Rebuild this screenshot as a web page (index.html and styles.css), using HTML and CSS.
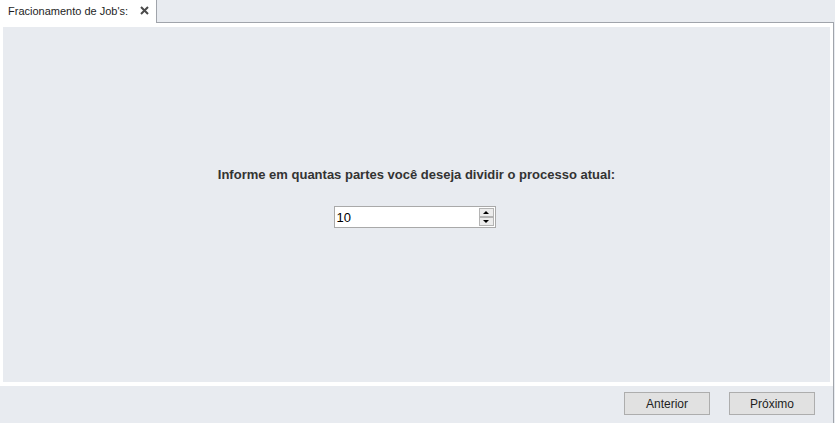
FILE: index.html
```html
<!DOCTYPE html>
<html lang="pt">
<head>
    <meta charset="UTF-8">
    <title>Fracionamento de Job's</title>
    <link rel="stylesheet" href="styles.css">
</head>
<body>
    <div class="tabstrip">
        <div class="tab">
            <span class="tab-label">Fracionamento de Job's:</span>
            <svg class="tab-close" width="9" height="9" viewBox="0 0 9 9">
                <path d="M1 1 L8 8 M8 1 L1 8" stroke="#4a4a4a" stroke-width="2"/>
            </svg>
        </div>
        <div class="tab-rest"></div>
    </div>

    <div class="page">
        <!-- area principal -->
        <div class="main">
            <p class="question">Informe em quantas partes você deseja dividir o processo atual:</p>
            <div class="spin">
                <span class="spin-value">10</span>
                <div class="spin-buttons">
                    <div class="spin-btn"><span class="arrow-up"></span></div>
                    <div class="spin-btn"><span class="arrow-down"></span></div>
                </div>
            </div>
        </div>

        <!-- botões de navegação -->
        <div class="footer">
            <button class="btn">Anterior</button>
            <button class="btn">Próximo</button>
        </div>
    </div>
</body>
</html>
```

FILE: styles.css
```css
body {
    margin: 0;
    background-color: #e8ebf0;
    font-family: "Liberation Sans", Arial, sans-serif;
    width: 835px;
    height: 423px;
    overflow: hidden;
}

.tabstrip {
    display: flex;
    height: 23px;
}

.tab {
    width: 157px;
    height: 23px;
    background-color: #fff;
    border-right: 1px solid #a0a4ab;
    display: flex;
    align-items: center;
    box-sizing: border-box;
    padding: 0 0 2px 8px;
}

.tab-label {
    font-family: "Liberation Sans", Arial, sans-serif;
    font-size: 11px;
    color: #1e1e1e;
}

.tab-close {
    margin-left: auto;
    margin-right: 7px;
}

.tab-rest {
    flex: 1;
    border-bottom: 1px solid #a0a4ab;
    box-sizing: border-box;
    margin-right: 1px;
}

.page {
    width: 834px;
    height: 400px;
    box-sizing: border-box;
    background-color: #fff;
    border-right: 1px solid #a0a4ab;
    padding-top: 4px;
    display: flex;
    flex-direction: column;
}

.main {
    height: 355px;
    margin: 0 3px;
    background-color: #e8ebf0;
    display: flex;
    flex-direction: column;
    align-items: center;
    justify-content: center;
    padding-bottom: 14px;
    box-sizing: border-box;
}

.question {
    margin: 0 0 24px 0;
    font-weight: bold;
    font-size: 13px;
    color: #333;
}

.spin {
    width: 162px;
    height: 22px;
    margin-right: 4px;
    box-sizing: border-box;
    border: 1px solid #a9a9a9;
    background-color: #fff;
    display: flex;
    align-items: center;
    padding: 0 1px 0 2px;
}

.spin-value {
    flex: 1;
    font-size: 13px;
    color: #000;
}

.spin-buttons {
    display: flex;
    flex-direction: column;
}

.spin-btn {
    width: 15px;
    height: 9px;
    box-sizing: border-box;
    border: 1px solid #b4b4b4;
    background-color: #ececec;
    display: flex;
    align-items: center;
    justify-content: center;
}

.arrow-up {
    border-left: 3px solid transparent;
    border-right: 3px solid transparent;
    border-bottom: 3px solid #000;
}

.arrow-down {
    border-left: 3px solid transparent;
    border-right: 3px solid transparent;
    border-top: 3px solid #000;
}

.footer {
    margin-top: 4px;
    height: 37px;
    background-color: #e8ebf0;
    display: flex;
    justify-content: flex-end;
    align-items: flex-start;
    gap: 19px;
    padding: 6px 18px 0 0;
    box-sizing: border-box;
}

.btn {
    width: 86px;
    height: 23px;
    background-color: #e1e1e1;
    border: 1px solid #adadad;
    font-family: "Liberation Sans", Arial, sans-serif;
    font-size: 12px;
    color: #1e1e1e;
    padding: 0;
}
```
